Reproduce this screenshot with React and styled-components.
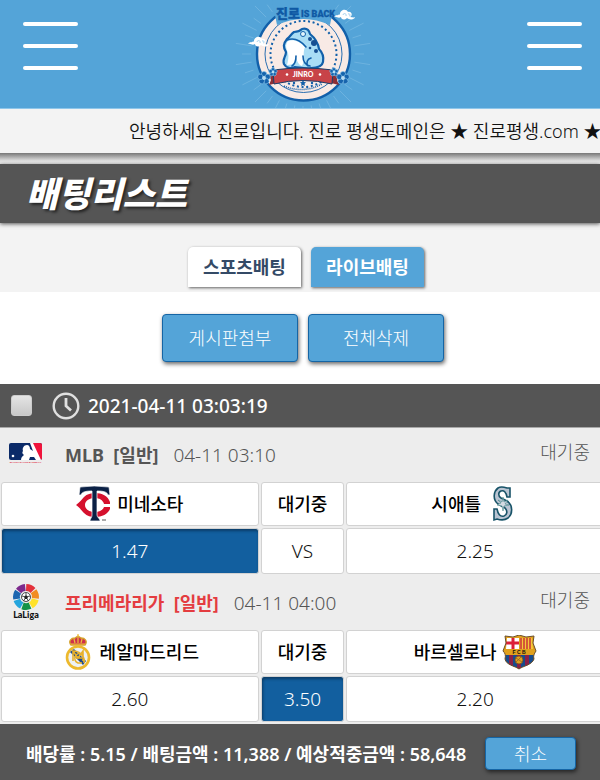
import React from "react";
import styled, { createGlobalStyle, css } from "styled-components";

const GlobalStyle = createGlobalStyle`
  *, *::before, *::after { box-sizing: border-box; }
  body {
    margin: 0;
    background: #ffffff;
    color: #111111;
    font-family: "Noto Sans", "Noto Sans CJK KR", sans-serif;
    font-size: 18px;
    line-height: 24px;
    overflow-x: hidden;
  }
  button, input { font: inherit; }
`;

const light = css`
  font-family: "Noto Sans", "Noto Sans CJK KR", sans-serif;
  font-weight: 300;
`;

const Page = styled.div`
  overflow: hidden;
`;

const Header = styled.header`
  display: flex;
  justify-content: space-between;
  align-items: flex-start;
  height: 109px;
  padding: 0 18px 0 23px;
  background: #54a4d8;
  border-bottom: 1px solid #8fc6ea;
`;

const MenuButton = styled.button`
  display: flex;
  flex-direction: column;
  gap: 18px;
  margin-top: 22px;
  padding: 0;
  border: 0;
  background: none;
  cursor: pointer;
`;

const MenuLine = styled.span`
  width: 55px;
  height: 4px;
  border-radius: 2px;
  background: #ffffff;
`;

const HomeLink = styled.a`
  display: block;
  height: 108px;
`;

const NoticeWrap = styled.div`
  padding-bottom: 11px;
  background: linear-gradient(#f3f3f3 44px, #777777 44px, #a0a0a0 47px, #e3e3e3 52px, #eeeeee 55px);
`;

const Notice = styled.div`
  height: 44px;
  padding: 10px 0 0 129px;
  overflow: hidden;
  white-space: nowrap;
  font-weight: 350;
`;

const TitleBar = styled.h1`
  position: relative;
  display: flex;
  align-items: center;
  height: 59px;
  margin: 0;
  padding: 0 26px 4px;
  background: #555555;
  box-shadow: 0 1px 4px #555555;
  color: #ffffff;
  font-family: "Noto Sans CJK KR", sans-serif;
  font-size: 35px;
  line-height: 40px;
  font-style: italic;
  font-weight: 900;
  text-shadow: 2px 2px 3px rgba(0, 0, 0, 0.6);
`;

const Tabs = styled.nav`
  display: flex;
  justify-content: center;
  gap: 10px;
  margin-right: -12px;
  padding: 24px 0 5px;
  background: #f3f3f3;
`;

const Tab = styled.button`
  width: 113px;
  height: 40px;
  padding: 0;
  border: 0;
  border-radius: 5px 5px 0 0;
  background: ${(p) => (p.$active ? "#54a4d8" : "#ffffff")};
  color: ${(p) => (p.$active ? "#ffffff" : "#344a66")};
  box-shadow: 1px 1px 3px rgba(0, 0, 0, 0.6);
  font-weight: 700;
  cursor: pointer;
`;

const Actions = styled.div`
  display: flex;
  justify-content: center;
  gap: 10px;
  padding: 22px 0;
  margin-right: -6px;
`;

const ActionButton = styled.button`
  ${light}
  width: ${(p) => (p.$small ? "91px" : "136px")};
  height: ${(p) => (p.$small ? "33px" : "48px")};
  flex-shrink: 0;
  padding: 0;
  border: 1px solid #1565a5;
  border-radius: 4px;
  background: #54a4d8;
  color: #ffffff;
  box-shadow: 1px 2px 4px rgba(0, 0, 0, 0.6);
  cursor: pointer;
`;

const SlipHeader = styled.div`
  display: flex;
  align-items: center;
  height: 44px;
  padding: 0 11px;
  background: #555555;
  border-bottom: 1px solid #a8a8a8;
  color: #ffffff;
  font-size: 19px;
  font-weight: 500;
`;

const SlipLabel = styled.label`
  display: flex;
  align-items: center;
  gap: 8px;
`;

const Check = styled.input`
  appearance: none;
  width: 21px;
  height: 21px;
  margin: 0 20px 0 0;
  border: 1px solid #cccccc;
  border-radius: 3px;
  background: linear-gradient(#e4e4e4, #c8c8c8);
`;

const LeagueRow = styled.div`
  display: grid;
  grid-template-columns: 56px 1fr auto;
  height: 54px;
  padding: 0 10px 0 9px;
  background: #ededed;
  color: #555555;
`;

const LeagueLogo = styled.div`
  display: flex;
  align-items: center;
  padding-bottom: 3px;
`;

const LeagueInfo = styled.div`
  display: flex;
  align-items: center;
  gap: 15px;
  white-space: pre;
`;

const LeagueName = styled.strong`
  color: ${(p) => (p.$accent ? "#e43c40" : "#555555")};
  font-weight: 700;
`;

const KickOff = styled.time`
  ${light}
  font-size: 19px;
`;

const Status = styled.span`
  ${light}
  padding-top: 12px;
`;

const Board = styled.div`
  display: grid;
  grid-template-columns: 43fr 14fr 43fr;
  gap: 2px;
  margin-right: -5px;
  padding: 0 1px 2px;
  background: #ededed;
`;

const cell = css`
  display: flex;
  align-items: center;
  justify-content: center;
  border: 1px solid #d2d2d2;
  border-radius: 3px;
`;

const Team = styled.div`
  ${cell}
  gap: ${(p) => p.$gap || "4px"};
  height: 44px;
  background: #ffffff;
  color: #000000;
  font-weight: 500;
`;

const Odds = styled.button`
  ${cell}
  ${light}
  height: 46px;
  padding: 0;
  font-size: 19px;
  background: ${(p) => (p.$picked ? "#125f9f" : "#ffffff")};
  color: ${(p) => (p.$picked ? "#ffffff" : "#111111")};
  box-shadow: ${(p) => (p.$picked ? "inset 1px 2px 3px #0b3c66" : "none")};
  cursor: pointer;
`;

const Footer = styled.footer`
  display: flex;
  align-items: center;
  justify-content: space-between;
  height: 57px;
  padding: 2px 24px 0 26px;
  background: #555555;
  color: #ffffff;
  font-weight: 600;
  white-space: nowrap;
`;

function Cloud({ at }) {
  return (
    <g transform={at}>
      <path d="M0 9c2-3 5-1 6-3 0-4 6-6 8-2 4-1 5 4 2 5 2 0 4 1 5 0-1 4-7 2-8 1-3 3-6 1-6-1-3 2-4-1-7 0z" fill="#fff" />
      <path d="M9 7c0-2 4-2 3 1M14 6c2-1 3 2 1 2" fill="none" stroke="#8fc6ea" strokeWidth="0.8" />
    </g>
  );
}

function Flower({ x, y, r }) {
  return (
    <g transform={`translate(${x} ${y})`}>
      {[0, 72, 144, 216, 288].map((a) => (
        <circle key={a} cx="0" cy={-r} r={r * 0.72} fill="#1764ad" stroke="#8cc7ec" strokeWidth="0.6" transform={`rotate(${a})`} />
      ))}
      <circle r={r * 0.5} fill="#b9dcf1" />
    </g>
  );
}

function JinroLogo() {
  const rays = Array.from({ length: 40 }, (_, i) => i * 9);
  return (
    <svg width="140" height="108" viewBox="2 0 140 108" role="img" aria-label="진로 is back">
      <g stroke="#85c1e6" strokeWidth="0.8" opacity="0.6">
        {rays.map((a) => (
          <line key={a} x1="72" y1="2" x2="72" y2={a % 2 ? -14 : -7} transform={`rotate(${a} 72 54)`} />
        ))}
      </g>
      <circle cx="72.500" cy="54" r="46.500" fill="#f8eae5" stroke="#1260aa" strokeWidth="2.4" />
      <circle cx="72.500" cy="54" r="38.500" fill="none" stroke="#1260aa" strokeWidth="0.9" />
      <circle cx="72.500" cy="54" r="33" fill="none" stroke="#1260aa" strokeWidth="2" strokeDasharray="2 2.7" />
      <path d="M41 0H104L99 25Q72 13 46 25z" fill="#54a4d8" />
      <g fill="#0f59a4" stroke="#0f59a4" strokeWidth="0.3" fontWeight="900">
        <text x="45" y="18" fontFamily="Noto Sans CJK KR" fontSize="13">진로</text>
        <text x="70" y="17" fontFamily="Roboto" fontSize="9">IS BACK</text>
      </g>
      <path d="M53 64c-2-5 2-7 2-12-3-5-3-8 1-13 3-2 4-5 7-7 4 0 6-1 8-3 4-1 7 1 8 5 5 4 8 8 9 15 4 4 5 8 4 13-1 5-7 6-12 6-7 1-12-1-16-1-4 2-9 1-11-3z" fill="#a9ddf5" stroke="#1260aa" strokeWidth="2.2" strokeLinejoin="round" />
      <path d="M57 41c6-2 12 1 17 6-2 5-1 9-1 14l-2 5c-3-1-5-4-6-9-1 5-2 8-9 8 1-4 2-8 1-12-2-5-3-8 0-12z" fill="#fff" />
      <path d="M56 40c8-3 14 1 19 7M65 56c0 5-1 8-4 10M72 56c0 6 2 9 7 10M80 58c-4 1-5 5-3 8" fill="none" stroke="#1260aa" strokeWidth="1.6" strokeLinecap="round" />
      <circle cx="72" cy="34" r="2.500" fill="#e5f6fd" stroke="#1260aa" />
      <g fill="#174f92"><circle cx="83" cy="43" r="3" /><circle cx="79" cy="39" r="2" /><circle cx="85" cy="51" r="2" /><circle cx="79" cy="48" r="1.3" /></g>
      <path d="M38 75l8-4v12l-8 2 2-5zM108 75l-8-4v12l8 2-2-5z" fill="#8c2f36" />
      <path d="M42 70Q72 66 102 70L101 84Q72 77 43 84z" fill="#c84348" stroke="#1b3d68" strokeWidth="1" />
      <text x="72" y="77" textAnchor="middle" fill="#fff" fontFamily="Lato" fontWeight="900" fontSize="7">JINRO</text>
      <circle cx="56" cy="74.500" r="1.300" fill="#fff" /><circle cx="89" cy="74.500" r="1.300" fill="#fff" />
      <path d="M53 86Q72 94 91 84" fill="none" stroke="#1260aa" strokeWidth="1.600" strokeDasharray="1 1" />
      <g fill="#1260aa"><circle cx="63" cy="83" r="1.200" /><path d="M72 80l1 2 2 .3-1.500 1.500.5 2.200-2-1-2 1 .5-2.200-1.500-1.500 2-.3z" /><circle cx="81" cy="83" r="1.200" /></g>
      <Cloud at="translate(17 35)" />
      <Cloud at="translate(103 8)" />
      <Flower x={33} y={78} r={3.8} /><Flower x={42} y={72} r={2.5} />
      <Flower x={112} y={78} r={3.8} /><Flower x={103} y={72} r={2.5} />
    </svg>
  );
}

function ClockIcon() {
  return (
    <svg width="28" height="28" viewBox="0 0 28 28" fill="none" stroke="#e0e0e0" strokeWidth="2.4" aria-hidden="true">
      <circle cx="14" cy="14" r="12.300" />
      <path d="M14 6v8l5 4.500" strokeWidth="2.800" />
    </svg>
  );
}

function MlbLogo() {
  return (
    <svg width="33" height="21" viewBox="0 0 33 21" role="img" aria-label="MLB">
      <rect width="33" height="17" rx="2" fill="#0b2a68" />
      <path d="M22 0h9q2 0 2 2v13q0 2-2 2h-1z" fill="#f0143c" />
      <path d="M21 0h3l8 17H12c0-3 2-4 3-5-2-1-2-3-1-4-1-3 1-6 4-6 2 0 3 2 3 4l3 2z" fill="#fff" />
      <path d="M21 14l4 0 2 3h-7z" fill="#0b2a68" />
      <circle cx="4" cy="13" r="1.300" fill="#fff" />
      <text x="16.500" y="20" textAnchor="middle" fill="#df3148" fontFamily="Liberation Sans" fontWeight="700" fontSize="2.300">MAJOR LEAGUE BASEBALL</text>
    </svg>
  );
}

function LaLigaLogo() {
  const colors = ["#e4323b", "#f28c22", "#ffe22a", "#139348", "#25a5dd", "#1d66b0", "#7d2a8c"];
  return (
    <svg width="34" height="36" viewBox="0 0 34 36" role="img" aria-label="LaLiga">
      {colors.map((c, i) => (
        <path key={c} d="M12 1Q17-1 22 1L19.500 7.500Q17 6 14.500 7.500z" fill={c} transform={`rotate(${i * 51.4 + 24} 17 13)`} />
      ))}
      <circle cx="17" cy="13" r="4.500" fill="#fff" stroke="#222" strokeWidth="0.8" />
      <path d="M17 11l2 1.500-.7 2.500h-2.600L15 12.500z" fill="#222" />
      <path d="M17 9v2M21 12l-2 .5M18.300 15l1 2M15.700 15l-1 2M13 12l2 .5" stroke="#222" strokeWidth="0.8" />
      <text x="17" y="34" textAnchor="middle" fill="#111" fontFamily="Lato" fontWeight="900" fontSize="9">LaLiga</text>
    </svg>
  );
}

function TwinsLogo() {
  return (
    <svg width="36" height="36" viewBox="0 0 36 36" role="img" aria-label="Minnesota Twins">
      <path d="M0 19C4 16 6 13 8 11c3-3 7-4 11-4 7 0 13 3 15 9v2h-6c-1-4-5-6-9-6-6 0-10 3-10 7s4 7 10 7c4 0 8-2 9-5h6v2c-2 5-8 8-15 8-4 0-8-1-11-4-2-2-4-5-8-8z" fill="#d5112e" />
      <path d="M3 9L4 1q14-2 29 0l1 8h-2c-1-3-4-4-11-4v24c0 2 2 3 3 5v1H14v-1c1-2 2-3 2-5V5C9 5 6 6 5 9z" fill="#0a2045" stroke="#fff" strokeWidth="0.700" />
      <path d="M26 34h4" stroke="#555" strokeWidth="1" />
    </svg>
  );
}

function MarinersLogo() {
  return (
    <svg width="26" height="36" viewBox="0 0 26 36" role="img" aria-label="Seattle Mariners">
      <path d="M17 2v9h-3c-1-5-3-7-6-6-3 1-3 5 0 7l6 3c6 4 6 13 1 17-4 3-8 2-11 1l-3 1V23h3c1 5 3 8 7 7 3-1 4-5 1-8l-7-4C-1 13 1 5 5 2c3-2 6-1 9 0z" fill="#b9c4d2" stroke="#185368" strokeWidth="1.600" />
      <path d="M10 11l1 5 4-2-3 4 4 1-5 1-1 5-1-5-5-1 4-2-3-3 4 2z" fill="#d5dbe3" stroke="#438486" strokeWidth="0.600" />
    </svg>
  );
}

function MadridLogo() {
  return (
    <svg width="30" height="36" viewBox="-4 0 30 36" role="img" aria-label="Real Madrid">
      <path d="M6 11C3 7 6 4 10 4l3-2 3 2c4 0 7 3 4 7z" fill="#cf304b" stroke="#d5a42b" strokeWidth="1.300" />
      <path d="M13 0v9M9 5l1 4M17 5l-1 4M6 10h14" stroke="#edbd3d" strokeWidth="1.200" />
      <circle cx="13" cy="23.500" r="11" fill="#eef1f4" stroke="#edb92d" strokeWidth="2.600" />
      <path d="M5 18l4-3 12 12-3 4z" fill="#214c8c" />
      <path d="M8 27V17l5 7 5-7v10M9 17c8 1 11 7 10 12M17 20c-7-3-10 7-4 9h4M11 24h6" fill="none" stroke="#e8b12b" strokeWidth="1.600" />
    </svg>
  );
}

function BarcaLogo() {
  return (
    <svg width="35" height="35" viewBox="0 0 35 35" role="img" aria-label="FC Barcelona">
      <defs><clipPath id="crest"><path d="M3 1l8 1 6-2 7 2 8-1-1 7 3 8c-2 3-3 5-2 8-2 6-11 7-15 10C13 31 4 30 3 24c1-4 0-6-2-8l3-8z" /></clipPath></defs>
      <g clipPath="url(#crest)">
        <path fill="#e0a01d" d="M0 0h35v35H0z" />
        <path fill="#fff" d="M5 3h12v11H4z" /><path d="M11 3v11M4 8h13" stroke="#dc2039" strokeWidth="3" />
        <path fill="#f3c83a" d="M18 3h12l1 11H18z" /><path d="M19 3v11M22 3v11M25 3v11M28 3v11" stroke="#cb3037" strokeWidth="1.500" />
        <path fill="#164b8d" d="M3 20h29v12H3z" /><path d="M9 20v13M17 20v14M25 20v13" stroke="#8a2048" strokeWidth="4" />
        <circle cx="17" cy="25" r="4" fill="#e0a01d" stroke="#714c25" strokeWidth="0.800" />
        <path d="M14 23l6 4M14 27l5-5" stroke="#8c6427" strokeWidth="0.800" />
        <text x="17" y="19" textAnchor="middle" fontFamily="Liberation Sans" fontWeight="700" fontSize="5" fill="#111">F C B</text>
      </g>
      <path d="M3 1l8 1 6-2 7 2 8-1-1 7 3 8c-2 3-3 5-2 8-2 6-11 7-15 10C13 31 4 30 3 24c1-4 0-6-2-8l3-8z" fill="none" stroke="#6b4f2c" strokeWidth="1" />
    </svg>
  );
}

function Menu({ label }) {
  return <MenuButton aria-label={label}><MenuLine /><MenuLine /><MenuLine /></MenuButton>;
}

const matches = [
  {
    league: "MLB  [일반]", time: "04-11 03:10", Logo: MlbLogo,
    home: "미네소타", HomeLogo: TwinsLogo, homeGap: "5px",
    away: "시애틀", AwayLogo: MarinersLogo, awayGap: "12px",
    odds: ["1.47", "VS", "2.25"], picked: 0,
  },
  {
    league: "프리메라리가  [일반]", accent: true, time: "04-11 04:00", Logo: LaLigaLogo,
    home: "레알마드리드", HomeLogo: MadridLogo, homeGap: "9px",
    away: "바르셀로나", AwayLogo: BarcaLogo, awayGap: "5px",
    odds: ["2.60", "3.50", "2.20"], picked: 1,
  },
];

function Match({ match }) {
  const { Logo, HomeLogo, AwayLogo } = match;
  return (
    <section>
      <LeagueRow>
        <LeagueLogo><Logo /></LeagueLogo>
        <LeagueInfo>
          <LeagueName $accent={match.accent}>{match.league}</LeagueName>
          <KickOff>{match.time}</KickOff>
        </LeagueInfo>
        <Status>대기중</Status>
      </LeagueRow>
      <Board>
        <Team $gap={match.homeGap}><HomeLogo />{match.home}</Team>
        <Team>대기중</Team>
        <Team $gap={match.awayGap}>{match.away}<AwayLogo /></Team>
        {match.odds.map((value, i) => (
          <Odds key={value} $picked={i === match.picked} aria-pressed={i === match.picked}>{value}</Odds>
        ))}
      </Board>
    </section>
  );
}

export default function App() {
  return (
    <Page>
      <GlobalStyle />
      <Header>
        <Menu label="메뉴" />
        <HomeLink href="#" aria-label="홈"><JinroLogo /></HomeLink>
        <Menu label="내 정보" />
      </Header>
      <NoticeWrap>
        <Notice>안녕하세요 진로입니다. 진로 평생도메인은 ★ 진로평생.com ★</Notice>
      </NoticeWrap>
      <TitleBar>배팅리스트</TitleBar>
      <Tabs>
        <Tab>스포츠배팅</Tab>
        <Tab $active>라이브배팅</Tab>
      </Tabs>
      <Actions>
        <ActionButton>게시판첨부</ActionButton>
        <ActionButton>전체삭제</ActionButton>
      </Actions>
      <main>
        <SlipHeader>
          <Check type="checkbox" id="slip" />
          <SlipLabel htmlFor="slip"><ClockIcon />2021-04-11 03:03:19</SlipLabel>
        </SlipHeader>
        {matches.map((m) => <Match key={m.home} match={m} />)}
      </main>
      <Footer>
        <span>배당률 : 5.15 / 배팅금액 : 11,388 / 예상적중금액 : 58,648</span>
        <ActionButton $small>취소</ActionButton>
      </Footer>
    </Page>
  );
}
